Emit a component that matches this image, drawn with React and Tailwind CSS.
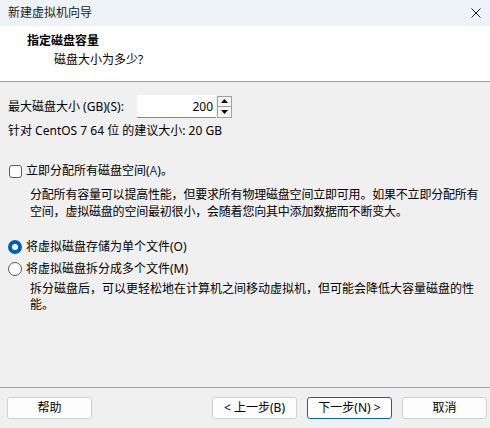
import React, { useState } from "react";

const font = { fontFamily: '"Noto Sans", "Noto Sans CJK SC", sans-serif' };

const Btn = ({ children, primary }) => (
  <button
    className={
      "w-[85px] h-[22px] rounded-[3px] bg-[#fdfdfd] text-[12px] text-black flex items-center justify-center leading-none " +
      (primary ? "border border-[#0067c0]" : "border border-[#d0d0d0]")
    }
  >
    {children}
  </button>
);

const App = () => {
  const [size, setSize] = useState(200);
  const [split, setSplit] = useState(false);
  const [alloc, setAlloc] = useState(false);

  return (
    <div className="w-[490px] h-[428px] bg-[#f0f0f0] flex flex-col text-[12px] text-black" style={font}>
      {/* title bar */}
      <div className="h-[26px] bg-[#eef2f9] flex items-center justify-between pl-[8px] pr-[6px] mr-[1px] shrink-0">
        <span className="text-[#1b1b1b]">新建虚拟机向导</span>
        <svg width="10" height="10" viewBox="0 0 10 10" className="mr-[2px]">
          <path d="M0.5 0.5 L9.5 9.5 M9.5 0.5 L0.5 9.5" stroke="#222" strokeWidth="1" />
        </svg>
      </div>

      {/* header */}
      <div className="h-[56px] bg-white border-b border-[#a0a0a0] pl-[27px] pt-[7px] shrink-0">
        <div className="font-bold leading-[16px]">指定磁盘容量</div>
        <div className="pl-[27px] mt-[3px] leading-[16px]">磁盘大小为多少?</div>
      </div>

      {/* body */}
      <div className="flex-1 px-[8px] pt-[13px]">
        <div className="flex items-center">
          <span className="w-[129px] whitespace-nowrap">最大磁盘大小 (GB)(S):</span>
          <div className="flex items-center">
            <input
              value={size}
              onChange={(e) => setSize(e.target.value)}
              className="w-[79px] h-[23px] bg-white border-b border-[#8a8a8a] text-right pr-[3px] text-[12px] outline-none"
              style={font}
            />
            <div className="ml-[1px] flex flex-col border border-[#a0a0a0] w-[15px] h-[22px]">
              <button onClick={() => setSize(Number(size) + 1)} className="flex-1 flex items-center justify-center border-b border-[#a0a0a0] bg-[#f5f5f5]">
                <svg width="7" height="4" viewBox="0 0 7 4"><path d="M3.5 0 L7 4 L0 4 Z" fill="#000" /></svg>
              </button>
              <button onClick={() => setSize(Number(size) - 1)} className="flex-1 flex items-center justify-center bg-[#f5f5f5]">
                <svg width="7" height="4" viewBox="0 0 7 4"><path d="M0 0 L7 0 L3.5 4 Z" fill="#000" /></svg>
              </button>
            </div>
          </div>
        </div>
        <div className="mt-[5px] leading-[16px]">针对 CentOS 7 64 位 的建议大小: 20 GB</div>

        <label className="mt-[23px] flex items-center gap-[4px] cursor-default" onClick={() => setAlloc(!alloc)}>
          <span className="w-[13px] h-[13px] ml-[1px] rounded-[3px] border border-[#5a5a5a] bg-white flex items-center justify-center">
            {alloc && (
              <svg width="9" height="9" viewBox="0 0 9 9"><path d="M1 4.5 L3.5 7 L8 1.5" stroke="#000" fill="none" strokeWidth="1.3" /></svg>
            )}
          </span>
          <span>
            立即分配所有磁盘空间(<span className="text-[#0b3d91]">A</span>)。
          </span>
        </label>
        <div className="pl-[22px] mt-[6px] leading-[17px] whitespace-nowrap tracking-[-0.2px]">
          分配所有容量可以提高性能，但要求所有物理磁盘空间立即可用。如果不立即分配所有
          <br />
          空间，虚拟磁盘的空间最初很小，会随着您向其中添加数据而不断变大。
        </div>

        <div className="mt-[18px] flex flex-col gap-[4px]">
          <label className="flex items-center gap-[4px]" onClick={() => setSplit(false)}>
            <span
              className={
                "w-[14px] h-[14px] rounded-full flex items-center justify-center " +
                (!split ? "bg-[#005fb8]" : "border border-[#5a5a5a] bg-white")
              }
            >
              {!split && <span className="w-[6px] h-[6px] rounded-full bg-white" />}
            </span>
            <span>将虚拟磁盘存储为单个文件(O)</span>
          </label>
          <label className="flex items-center gap-[4px]" onClick={() => setSplit(true)}>
            <span
              className={
                "w-[14px] h-[14px] rounded-full flex items-center justify-center " +
                (split ? "bg-[#005fb8]" : "border border-[#5a5a5a] bg-white")
              }
            >
              {split && <span className="w-[6px] h-[6px] rounded-full bg-white" />}
            </span>
            <span>将虚拟磁盘拆分成多个文件(M)</span>
          </label>
        </div>
        <div className="pl-[22px] mt-[3px] leading-[16px] whitespace-nowrap">
          拆分磁盘后，可以更轻松地在计算机之间移动虚拟机，但可能会降低大容量磁盘的性
          <br />
          能。
        </div>
      </div>

      {/* footer */}
      <div className="h-[41px] border-t border-[#a0a0a0] flex items-start pt-[9px] pl-[7px] pr-[3px] shrink-0">
        <Btn>帮助</Btn>
        <div className="ml-auto flex gap-[10px]">
          <Btn>&lt; 上一步(B)</Btn>
          <Btn primary>下一步(N) &gt;</Btn>
          <Btn>取消</Btn>
        </div>
      </div>
    </div>
  );
};

export default App;
